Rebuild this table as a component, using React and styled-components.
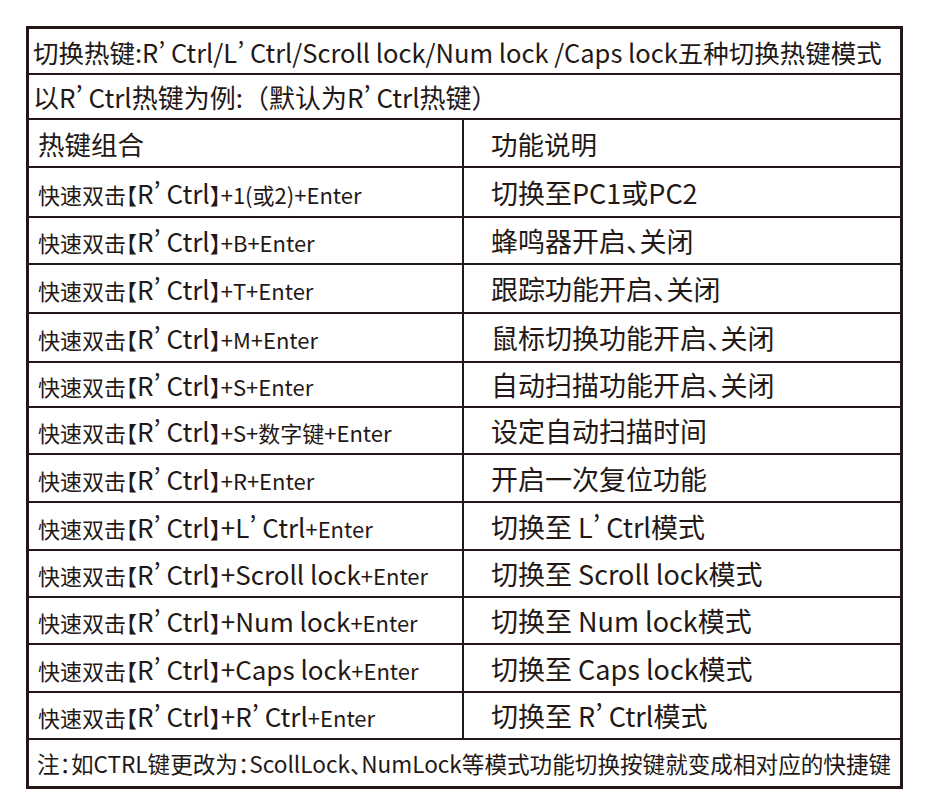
import React from "react";
import styled, { createGlobalStyle } from "styled-components";

const GlobalStyle = createGlobalStyle`
  html, body {
    margin: 0;
    padding: 0;
    background: #ffffff;
  }
  body {
    font-family: "Noto Sans CJK SC", "Noto Sans", sans-serif;
    color: #231815;
  }
`;

const INK = "#231815";

const Sheet = styled.div`
  box-sizing: border-box;
  width: 877px;
  margin: 26px 0 0 26px;
  border: 3px solid ${INK};
  display: flex;
  flex-direction: column;
  font-variant-east-asian: proportional-width;
  font-feature-settings: "halt";
`;

const Row = styled.div`
  box-sizing: border-box;
  height: ${(p) => p.h}px;
  border-top: ${(p) => (p.first ? "none" : `2px solid ${INK}`)};
  display: grid;
  grid-template-columns: ${(p) => (p.split ? "433px 1fr" : "1fr")};
`;

const Line = styled.div`
  display: flex;
  align-items: center;
  padding-left: ${(p) => p.pad || 4}px;
  font-size: ${(p) => p.size || 26}px;
  white-space: nowrap;
`;

const KeyCell = styled.div`
  display: flex;
  align-items: center;
  padding-left: 9px;
  font-size: 22px;
  white-space: nowrap;
`;

const DescCell = styled.div`
  box-sizing: border-box;
  border-left: 2px solid ${INK};
  display: flex;
  align-items: center;
  padding-left: 27px;
  font-size: ${(p) => p.size || 27}px;
  white-space: nowrap;
`;

const Big = styled.span`
  font-size: 26px;
`;

/* full-width paren kept at its CJK width, as in the print */
const Wide = styled.span`
  font-variant-east-asian: normal;
  font-feature-settings: normal;
`;

const rows = [
  { h: 50, key: "1(或2)", desc: "切换至PC1或PC2" },
  { h: 47, key: "B", desc: "蜂鸣器开启、关闭" },
  { h: 49, key: "T", desc: "跟踪功能开启、关闭" },
  { h: 49, key: "M", desc: "鼠标切换功能开启、关闭" },
  { h: 45, key: "S", desc: "自动扫描功能开启、关闭" },
  { h: 47, key: "S+数字键", desc: "设定自动扫描时间" },
  { h: 48, key: "R", desc: "开启一次复位功能" },
  { h: 48, key: "L’ Ctrl", big: true, desc: "切换至 L’ Ctrl模式" },
  { h: 47, key: "Scroll lock", big: true, desc: "切换至 Scroll lock模式" },
  { h: 47, key: "Num lock", big: true, desc: "切换至 Num lock模式" },
  { h: 48, key: "Caps lock", big: true, desc: "切换至 Caps lock模式" },
  { h: 47, key: "R’ Ctrl", big: true, desc: "切换至 R’ Ctrl模式" },
];

const HotkeyTable = () => (
  <Sheet lang="zh-CN">
    <Row h={44} first>
      <Line size={25.5}>
        切换热键:R’ Ctrl/L’ Ctrl/Scroll lock/Num lock /Caps lock五种切换热键模式
      </Line>
    </Row>
    <Row h={45}>
      <Line>
        <span>
          以R’ Ctrl热键为例:<Wide>（</Wide>默认为R’ Ctrl热键<Wide>）</Wide>
        </span>
      </Line>
    </Row>
    <Row h={48} split>
      <Line pad={9} size={26.5}>热键组合</Line>
      <DescCell size={26.5}>功能说明</DescCell>
    </Row>
    {rows.map((r) => (
      <Row key={r.key + r.desc} h={r.h} split>
        <KeyCell>
          <span>
            快速双击【<Big>R’ Ctrl</Big>】
            {r.big ? <Big>+{r.key}</Big> : `+${r.key}`}+Enter
          </span>
        </KeyCell>
        <DescCell>{r.desc}</DescCell>
      </Row>
    ))}
    <Row h={48}>
      <Line pad={8} size={22.6}>
        注：如CTRL键更改为：ScollLock、NumLock等模式功能切换按键就变成相对应的快捷键
      </Line>
    </Row>
  </Sheet>
);

export default function App() {
  return (
    <>
      <GlobalStyle />
      <HotkeyTable />
    </>
  );
}
